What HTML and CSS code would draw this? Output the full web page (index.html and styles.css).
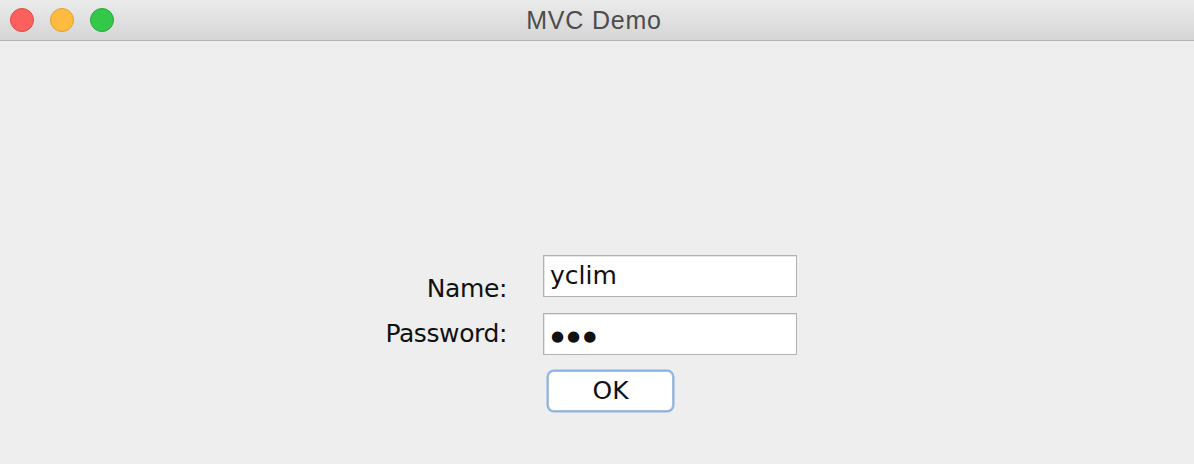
FILE: index.html
```html
<!DOCTYPE html>
<html>
<head>
<meta charset="utf-8">
<link rel="stylesheet" href="styles.css">
</head>
<body>
<div class="window">
  <div class="titlebar">
    <div class="lights">
      <span class="light red"></span>
      <span class="light yellow"></span>
      <span class="light green"></span>
    </div>
    <div class="title">MVC Demo</div>
  </div>
  <div class="content">
    <div class="form">
      <label class="label label-name">Name:</label>
      <div class="field"><span class="field-text">yclim</span></div>
      <label class="label label-pass">Password:</label>
      <div class="field"><span class="field-text dots">●●●</span></div>
      <div class="spacer"></div>
      <button class="ok">OK</button>
    </div>
  </div>
</div>
</body>
</html>
```
FILE: styles.css
```css
html, body {
  margin: 0;
  padding: 0;
  background: #eeeeee;
}
.window {
  width: 1194px;
  height: 464px;
  background: #eeeeee;
  overflow: hidden;
}
.titlebar {
  position: relative;
  height: 40px;
  background: linear-gradient(#ebebeb, #d5d5d5);
  border-bottom: 1px solid #b3b3b3;
  display: flex;
  align-items: center;
  justify-content: center;
}
.lights {
  position: absolute;
  left: 10px;
  top: 8px;
  display: flex;
  gap: 16px;
}
.light {
  width: 24px;
  height: 24px;
  border-radius: 50%;
  box-sizing: border-box;
}
.red { background: #fc605c; border: 1px solid #de4a45; }
.yellow { background: #fdbc40; border: 1px solid #dea034; }
.green { background: #34c84a; border: 1px solid #27a93a; }
.title {
  font-family: "Liberation Sans", Arial, sans-serif;
  font-size: 25px;
  letter-spacing: 0.8px;
  line-height: 40px;
  color: #4d4d4d;
  margin-left: -6px;
}
.content {
  padding-top: 214px;
  padding-left: 360px;
}
.form {
  display: grid;
  grid-template-columns: 147px 254px;
  grid-template-rows: 42px 42px 40px;
  column-gap: 36px;
  row-gap: 16px;
  font-family: "DejaVu Sans", "Lucida Grande", sans-serif;
  font-size: 25px;
  letter-spacing: -0.4px;
  color: #111;
}
.label {
  text-align: right;
  line-height: 30px;
  align-self: start;
}
.label-name { margin-top: 19px; }
.label-pass { margin-top: 6px; }
.field {
  box-sizing: border-box;
  background: #fff;
  border: 1px solid #b2b2b2;
  box-shadow: inset 1px 1px 0 #e6e6e6;
  padding: 5px 6px 0;
  line-height: 30px;
}
.field-text { letter-spacing: 0; }
.dots {
  font-size: 15px;
  letter-spacing: 3px;
  margin-left: 1px;
  position: relative;
  top: -1px;
}
.ok {
  justify-self: start;
  margin-left: 5px;
  width: 125px;
  height: 40px;
  box-sizing: border-box;
  background: #ffffff;
  border: 1px solid #a9bfd9;
  border-radius: 6px;
  box-shadow: 0 0 0 1.5px #85b3ea;
  font-family: "DejaVu Sans", "Lucida Grande", sans-serif;
  font-size: 25px;
  line-height: 36px;
  color: #111;
  padding: 0;
}
```
